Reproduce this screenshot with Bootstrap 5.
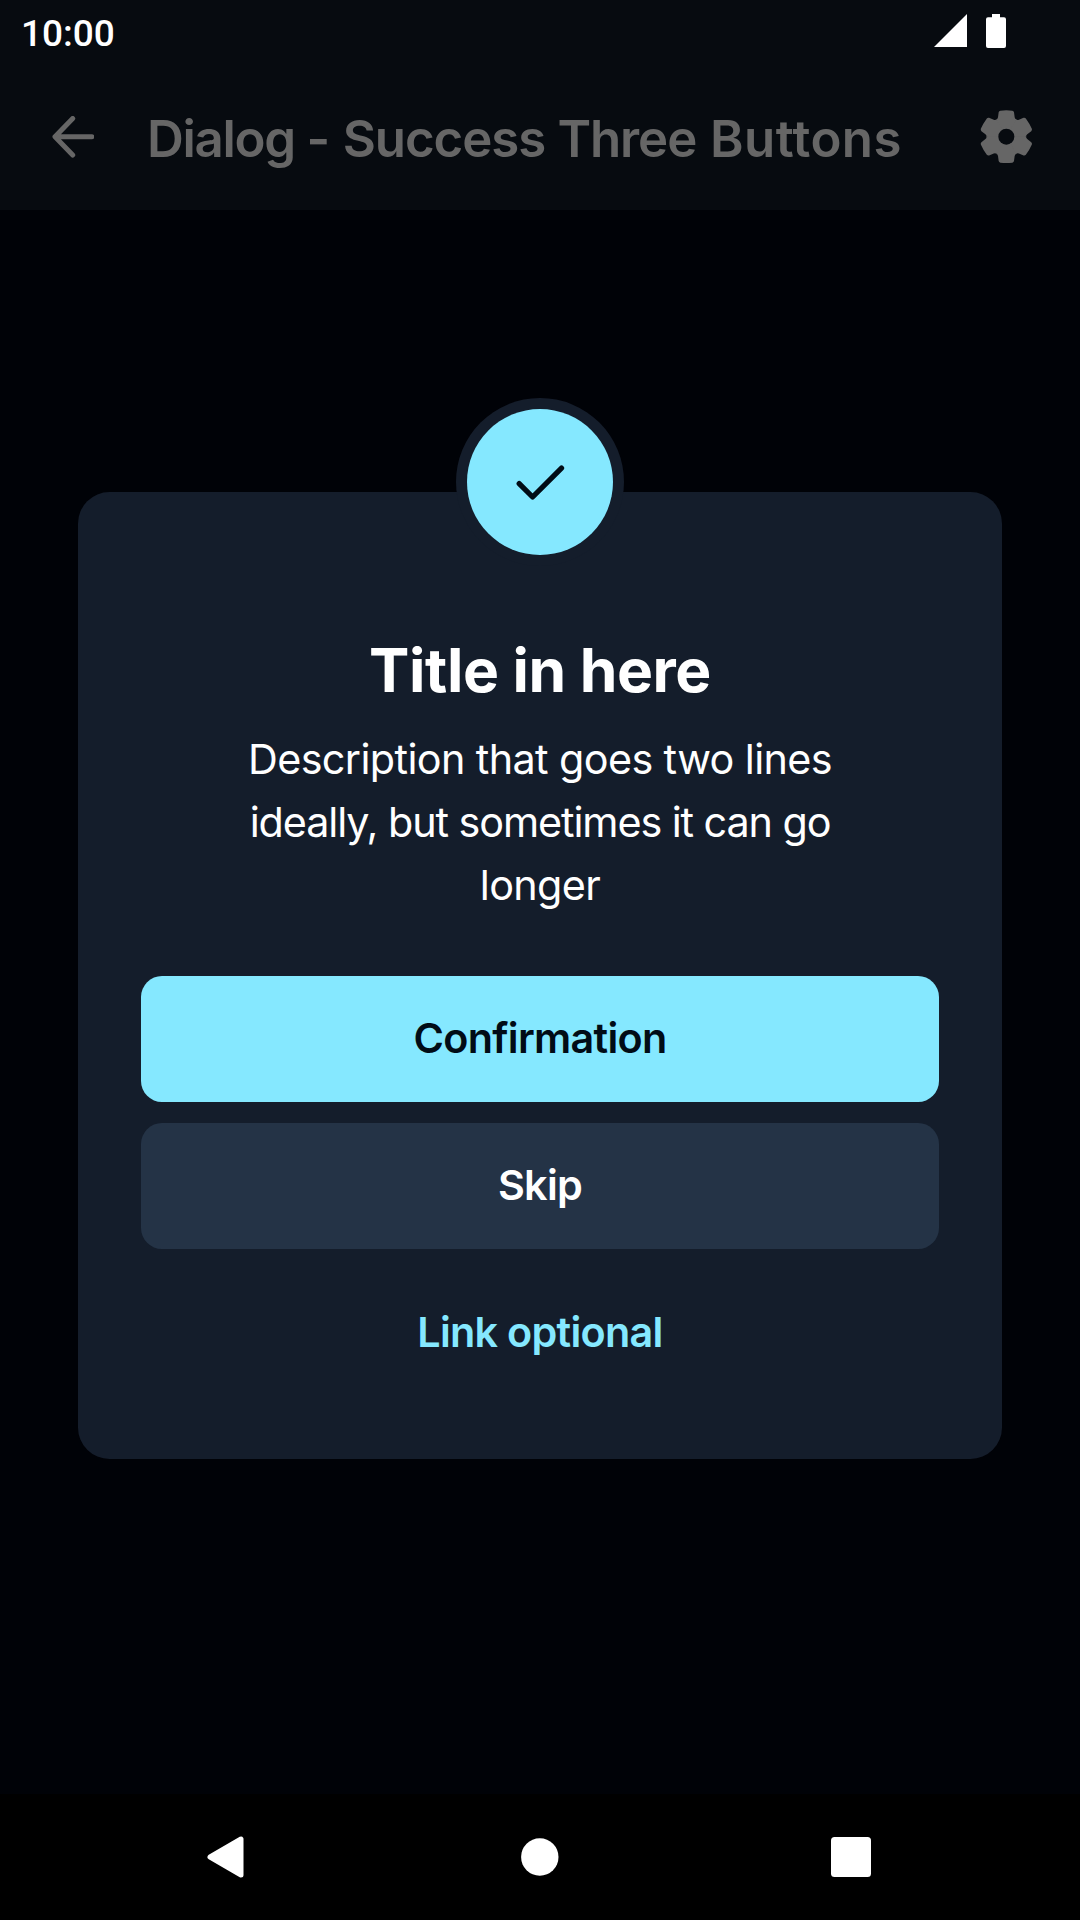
<!DOCTYPE html>
<html lang="en" data-bs-theme="dark">
<head>
<meta charset="utf-8">
<meta name="viewport" content="width=device-width, initial-scale=1">
<title>Dialog - Success Three Buttons</title>
<link href="https://cdn.jsdelivr.net/npm/bootstrap@5.3.0/dist/css/bootstrap.min.css" rel="stylesheet">
<style>
  body { background: #000207; color: #fff; font-family: Inter, "Liberation Sans", sans-serif; height: 1920px; overflow: hidden; }
  svg { display: block; flex: none; }
  .top-area { background: #070b10; height: 210px; }
  .status-bar { height: 63px; padding: 0 74px 0 21px; }
  .clock { font: 500 37px/67px Roboto, sans-serif; }
  .status-icons { gap: 19px; padding-top: 14px; }
  .app-bar { height: 147px; padding: 0 47px 0 52px; }
  .app-title { color: #666; font-size: 51px; font-weight: 640; line-height: 60px; margin: 4px 0 0 53px; letter-spacing: -.55px; white-space: nowrap; }
  .word-dialog { letter-spacing: -1.3px; margin-right: 1.5px; }
  .word-success { letter-spacing: -1.1px; }
  .word-three { letter-spacing: -1.1px; margin-right: 1.5px; }
  .word-buttons { letter-spacing: .4px; }
  .stage { padding: 282px 78px 0; }
  .dialog-card { background: #141d2b; border-radius: 31.5px; height: 967px; padding: 136px 63px 63px; }
  .badge-ring { top: -94px; left: 378px; width: 168px; height: 168px; background: #141d2b; }
  .badge-disc { width: 146px; height: 146px; background: #85e8ff; }
  .dialog-title { color: #fff; font-size: 60.5px; font-weight: 650; line-height: 84px; margin: 0 0 16px; letter-spacing: -.4px; }
  .dialog-text { font-size: 41.3px; line-height: 63px; margin: 0 0 59px; letter-spacing: -.6px; }
  .tight-line { letter-spacing: -1.08px; }
  .dialog-actions { gap: 21px; }
  .dialog-actions .btn { height: 126px; border: 0; border-radius: 21px; padding: 0 0 2px; font-size: 41.3px; font-weight: 600; line-height: 63px; letter-spacing: -.7px; }
  .btn-confirm { background: #85e8ff; color: #010c16; }
  .btn-skip { background: #243346; color: #fff; }
  .btn-optional { color: #85e8ff; }
  .system-nav { background: #000; height: 126px; padding: 0 209px 0 206px; }
</style>
<script src="https://cdn.jsdelivr.net/npm/bootstrap@5.3.0/dist/js/bootstrap.bundle.min.js"></script>
</head>
<body class="d-flex flex-column">
<header class="top-area">
  <div class="status-bar d-flex justify-content-between align-items-start">
    <span class="clock">10:00</span>
    <div class="status-icons d-flex">
      <svg width="33" height="34" viewBox="0 0 33 34"><path d="M0 33 33 0V33Z" fill="#fff"/></svg>
      <svg width="20" height="34" viewBox="0 0 20 34"><path d="M6 0h8v3.300h4a2 2 0 0 1 2 2V32a2 2 0 0 1-2 2H2a2 2 0 0 1-2-2V5.300a2 2 0 0 1 2-2h4Z" fill="#fff"/></svg>
    </div>
  </div>
  <div class="app-bar d-flex align-items-center">
    <svg width="42" height="42" viewBox="0 0 42 42" fill="none" stroke="#666" stroke-width="5" stroke-linecap="round" stroke-linejoin="round"><path d="M20.700 2.500 3 20.800 20.700 39M3.500 20.800H39.800"/></svg>
    <h1 class="app-title"><span class="word-dialog">Dialog -</span> <span class="word-success">Success</span> <span class="word-three">Three</span> <span class="word-buttons">Buttons</span></h1>
    <svg class="ms-auto" width="54" height="54" viewBox="-82 -80 162 162">
      <defs><path id="tooth" d="M0 0-30-52Q-26-52-25-58L-23-73Q-22-77-18-78Q0-80 18-78Q22-77 23-73L25-58Q26-52 30-52Z"/></defs>
      <g fill="#666"><circle r="57"/><use href="#tooth"/><use href="#tooth" transform="rotate(60)"/><use href="#tooth" transform="rotate(120)"/><use href="#tooth" transform="rotate(180)"/><use href="#tooth" transform="rotate(240)"/><use href="#tooth" transform="rotate(300)"/></g>
      <circle r="24" fill="#070b10"/>
    </svg>
  </div>
</header>
<main class="stage flex-grow-1">
  <section class="dialog-card position-relative text-center">
    <div class="badge-ring position-absolute rounded-circle d-flex align-items-center justify-content-center">
      <div class="badge-disc rounded-circle d-flex align-items-center justify-content-center">
        <svg width="50" height="38" viewBox="0 0 50 38" fill="none" stroke="#010c16" stroke-width="5.300" stroke-linecap="round" stroke-linejoin="round"><path d="M4.200 20.600 17.600 34 46.500 5.100"/></svg>
      </div>
    </div>
    <h2 class="dialog-title">Title in here</h2>
    <p class="dialog-text">Description that goes two lines<br><span class="tight-line">ideally, but sometimes it can go</span><br>longer</p>
    <div class="dialog-actions d-grid">
      <button class="btn btn-confirm" type="button">Confirmation</button>
      <button class="btn btn-skip" type="button">Skip</button>
      <button class="btn btn-optional" type="button">Link optional</button>
    </div>
  </section>
</main>
<nav class="system-nav d-flex justify-content-between align-items-center">
  <svg width="39" height="44" viewBox="0 0 39 44"><path d="M4 22 35 4V40Z" fill="#fff" stroke="#fff" stroke-width="5" stroke-linejoin="round"/></svg>
  <svg width="42" height="38" viewBox="0 0 42 38"><circle cx="22.800" cy="19" r="18.700" fill="#fff"/></svg>
  <svg width="40" height="40" viewBox="0 0 40 40"><rect width="40" height="40" rx="3.500" fill="#fff"/></svg>
</nav>
</body>
</html>
